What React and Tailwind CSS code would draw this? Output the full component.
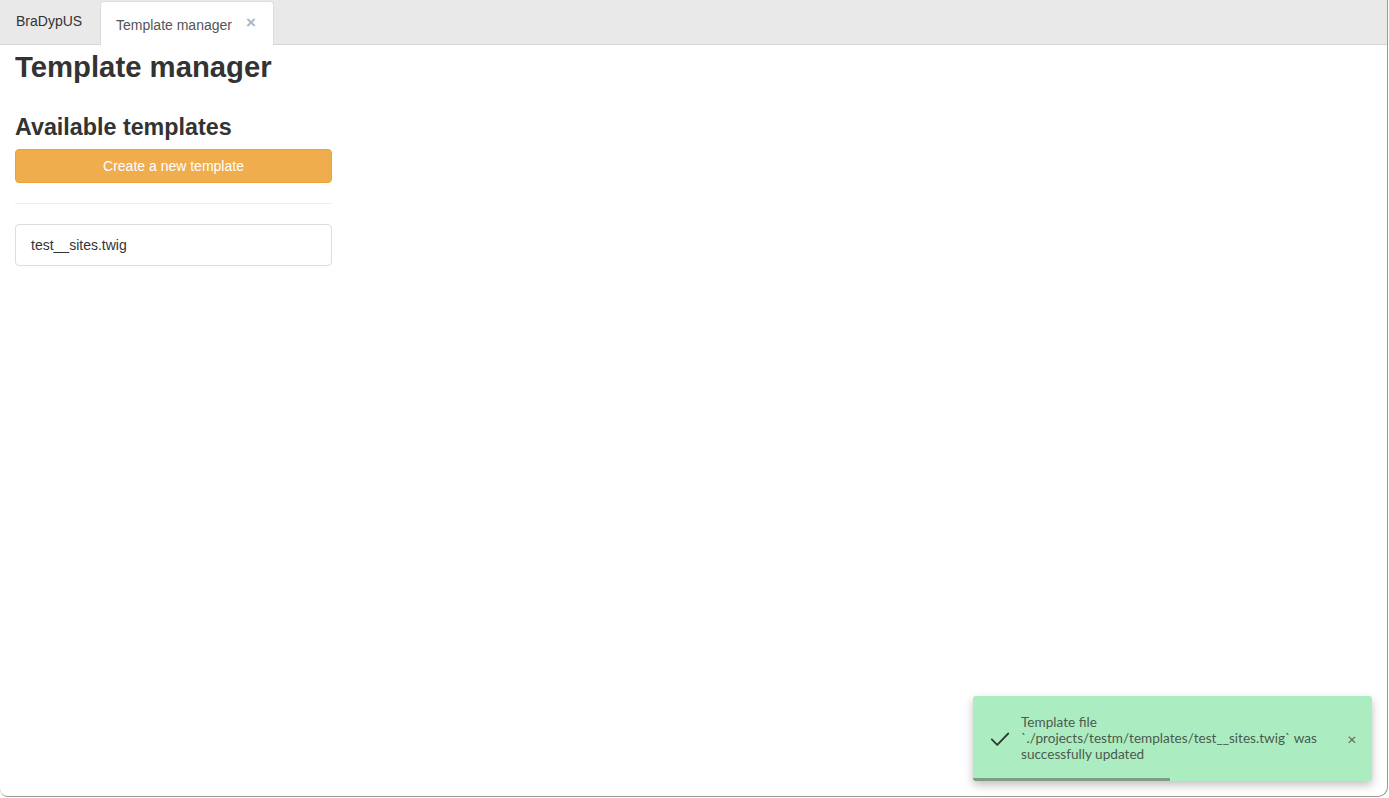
import React from "react";

export default function App() {
  const helv = { fontFamily: '"Liberation Sans", Arial, sans-serif' };
  return (
    <div className="w-[1389px] h-[798px] bg-white overflow-hidden relative" style={helv}>
      <div className="w-[1388px] h-[797px] border-r border-b border-[#9a9a9a] rounded-br-[10px] rounded-bl-[8px] overflow-hidden flex flex-col bg-white">
        {/* Tab bar */}
        <div className="h-[45px] bg-[#e9e9e9] border-b border-[#d6d6d6] flex items-end shrink-0">
          <div className="h-[44px] px-[16px] pt-[11px] text-[14px] text-[#333] w-[100px]">BraDypUS</div>
          <div className="h-[44px] w-[174px] bg-white border border-b-0 border-[#dcdcdc] rounded-t-[4px] -mb-px flex items-start pt-[13px] pl-[15px] text-[14px] text-[#555]">
            <span>Template manager</span>
            <span className="ml-[14px] text-[#b5b5b5] text-[17px] leading-[16px] font-bold">×</span>
          </div>
        </div>
        {/* Content */}
        <div className="px-[15px] flex flex-col w-[332px]">
          <h1 className="text-[29.3px] font-bold text-[#333] leading-[33px] mt-[5px]">Template manager</h1>
          <h3 className="text-[23.3px] font-bold text-[#333] leading-[26px] mt-[31px]">Available templates</h3>
          <button className="mt-[9px] h-[34px] w-[317px] bg-[#f0ad4e] border border-[#eea236] rounded-[4px] text-white text-[14px]">
            Create a new template
          </button>
          <div className="mt-[20px] h-px bg-[#eeeeee] w-[317px]" />
          <div className="mt-[20px] h-[42px] w-[317px] border border-[#dddddd] rounded-[4px] px-[15px] flex items-center text-[14px] text-[#333]">
            test__sites.twig
          </div>
        </div>
      </div>
      {/* Toast */}
      <div
        className="absolute left-[973px] top-[696px] w-[399px] h-[85px] bg-[#abedc0] rounded-[3px] shadow-[0_4px_10px_rgba(0,0,0,0.25)] overflow-hidden flex items-center"
        style={{ fontFamily: 'Lato, "Open Sans", sans-serif' }}
      >
        <div className="w-[48px] flex justify-center pl-[6px]">
          <svg width="22" height="22" viewBox="0 0 24 24" fill="none" stroke="#2f3b33" strokeWidth="2" strokeLinecap="round" strokeLinejoin="round">
            <path d="M3 12.5l6 6L21 6" />
          </svg>
        </div>
        <div className="flex-1 text-[13.6px] leading-[16px] text-[#4b5a4f] -mt-[2px]">
          Template file<br />
          `./projects/testm/templates/test__sites.twig` was<br />
          successfully updated
        </div>
        <div className="w-[40px] flex justify-center text-[#5a6a5e] text-[16px]">×</div>
        <div className="absolute left-0 bottom-0 h-[3px] w-[197px] bg-[#7d9d84]" />
      </div>
    </div>
  );
}
